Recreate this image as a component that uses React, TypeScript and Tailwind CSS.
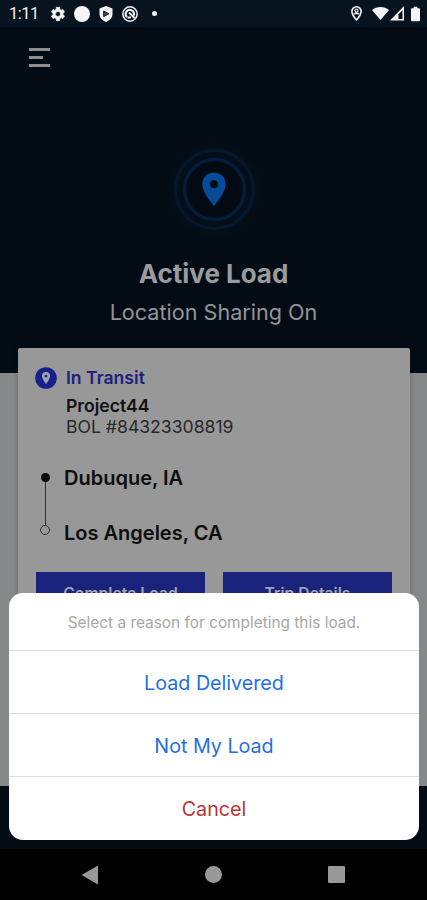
import React from "react";

function StatusBar() {
  return (
    <div className="flex h-[27px] shrink-0 items-center bg-[#07131e] pl-[9px] pr-[7px] text-[#f4f4f4]">
      <span className="w-[41px] font-[Roboto,sans-serif] text-[16.5px] leading-[27px] tracking-[-0.5px]">1:11</span>
      <svg className="h-4 w-4" viewBox="0 0 24 24" fill="currentColor" stroke="currentColor" strokeWidth="1">
        <path fillRule="evenodd" d="M19.4 13c.1-.3.1-.7.1-1s0-.7-.1-1l2.400-1.900-2.300-4-2.900 1.200-1.700-1L14.500 2h-5l-.4 3.300-1.700 1-2.900-1.200-2.300 4L4.600 11a8 8 0 0 0 0 2l-2.400 1.900 2.300 4 2.900-1.200 1.700 1 .4 3.300h5l.4-3.300 1.700-1 2.900 1.200 2.300-4L19.400 13ZM12 15.800a3.800 3.800 0 1 1 0-7.600 3.800 3.800 0 0 1 0 7.600Z" />
      </svg>
      <span className="ml-[8px] h-4 w-4 rounded-full bg-[#f6f6f6]" />
      <svg className="ml-[9px] h-4 w-[14px]" viewBox="0 0 14 16">
        <path d="M7 0l6.500 2.500V8c0 3.500-2.500 6.500-6.500 8C3 14.500.5 11.500.5 8V2.500Z" fill="currentColor" />
        <path d="M4.700 5l5.200 2.800-5.200 2.800Z" fill="#444d56" stroke="#07131e" strokeWidth="1" />
      </svg>
      <svg className="ml-[9px] h-4 w-4" viewBox="0 0 16 16" fill="none" stroke="currentColor">
        <circle cx="8" cy="8" r="7.200" strokeWidth="1.500" />
        <path d="M5 11A4.100 4.100 0 1 1 11.500 9.800" strokeWidth="2.100" />
        <path d="M7 6.500l5.500 5.500M5.500 11.500h3.500" strokeWidth="1.800" />
      </svg>
      <span className="ml-[14px] h-[5px] w-[5px] rounded-full bg-[#f6f6f6]" />
      <svg className="ml-auto h-[15px] w-[11px]" viewBox="0 0 11 15" fill="none" stroke="currentColor">
        <path d="M5.500.8a4.600 4.600 0 0 1 4.600 4.600c0 3.200-4.600 8.600-4.600 8.600S.9 8.600.9 5.400A4.600 4.600 0 0 1 5.500.8Z" strokeWidth="1.600" />
        <circle cx="5.500" cy="4.500" r="1.500" strokeWidth="1.200" />
        <path d="M3 8.300c1.500-1.400 3.500-1.400 5 0" strokeWidth="1.500" />
      </svg>
      <svg className="ml-[10px] h-[15px] w-[17px]" viewBox="0 0 17 15" fill="currentColor"><path d="M0 4C4.500.1 12.500.1 17 4L8.500 14Z" /></svg>
      <svg className="ml-[1px] h-[15px] w-[14px]" viewBox="0 0 14 15"><path fill="currentColor" d="M0 14.500L14 0V14.500Z" /><path d="M8.500 8.200l4-4v8.800h-4Z" fill="#07131e" /></svg>
      <svg className="ml-[7px] h-[16px] w-[9px]" viewBox="0 0 10 16" fill="currentColor"><path d="M3 0h4v1.500h2A1 1 0 0 1 10 2.500V15a1 1 0 0 1-1 1H1a1 1 0 0 1-1-1V2.500a1 1 0 0 1 1-1h2Z" /></svg>
    </div>
  );
}

function Header() {
  return (
    <header className="h-[346px] shrink-0 bg-[#030c14]">
      <div className="flex h-[106px] flex-col items-start gap-[5px] pl-[29px] pt-[21px]">
        <span className="h-[3px] w-[21px] bg-[#8d8d8d]" />
        <span className="h-[3px] w-[14px] bg-[#8d8d8d]" />
        <span className="h-[3px] w-[21px] bg-[#8d8d8d]" />
      </div>
      <svg className="mx-auto block h-[112px] w-[112px]" viewBox="0 0 112 112">
        <defs>
          <radialGradient id="glow">
            <stop offset="0.6" stopColor="#041525" />
            <stop offset="1" stopColor="#030c14" stopOpacity="0" />
          </radialGradient>
        </defs>
        <circle cx="56.500" cy="56.500" r="54" fill="url(#glow)" opacity=".6" />
        <circle cx="56.500" cy="56.500" r="39" fill="#030e18" stroke="#04172b" strokeWidth="3.500" />
        <circle cx="56.500" cy="56.500" r="30" fill="#020b13" stroke="#041c37" strokeWidth="3.500" />
        <path fillRule="evenodd" d="M56 39.500c-6.600 0-11.700 5.100-11.700 11.700 0 8.700 11.700 21.600 11.700 21.600S67.700 59.900 67.700 51.200c0-6.600-5.100-11.700-11.700-11.700Zm0 7.700a4 4 0 1 1 0 8 4 4 0 0 1 0-8Z" fill="#074b98" />
      </svg>
      <h1 className="mt-[12px] text-center text-[26px] font-bold leading-[34px] tracking-[-0.02px] text-[#999b9d]">Active Load</h1>
      <p className="mt-[4px] text-center text-[21.6px] leading-[34px] text-[#939597]">Location Sharing On</p>
    </header>
  );
}

function LoadCard() {
  return (
    <section className="ml-[18px] mt-[-25px] h-[300px] w-[392px] rounded-[2px] bg-[#989898] shadow-[0_0_5px_rgba(0,0,0,0.25)]">
      <div className="flex pl-[17px] pt-[20px]">
        <svg className="mr-[9px] mt-[-1px] h-[22px] w-[22px]" viewBox="0 0 22 22">
          <circle cx="11" cy="11" r="10.800" fill="#17208a" />
          <path fillRule="evenodd" d="M11 5a4 4 0 0 0-4 4c0 3 4 8 4 8s4-5 4-8a4 4 0 0 0-4-4Zm0 2.700a1.400 1.400 0 1 1 0 2.800 1.400 1.400 0 0 1 0-2.800Z" fill="#a2a2ae" />
        </svg>
        <div className="text-[17.600px] text-[#111]">
          <p className="h-[26px] font-semibold leading-[20px] text-[#202080]">In Transit</p>
          <p className="font-semibold leading-[23px]">Project44</p>
          <p className="leading-[20px] text-[#292929]">BOL #84323308819</p>
        </div>
      </div>
      <div className="flex pl-[22px] pt-[29px]">
        <div className="flex w-[10px] flex-col items-center pt-[7px]">
          <span className="h-[9px] w-[9px] rounded-full bg-[#090909]" />
          <span className="h-[43px] w-px bg-[#303030]" />
          <span className="h-[10px] w-[10px] rounded-full border border-[#333]" />
        </div>
        <div className="ml-[14px] text-[20px] font-semibold leading-[24px] text-[#0d0d0d]">
          <p>Dubuque, IA</p>
          <p className="mt-[31px]">Los Angeles, CA</p>
        </div>
      </div>
      <div className="mt-[27px] flex justify-between px-[18px] text-center text-[15.700px] font-semibold leading-[43px] text-[#a0a2b5]">
        <div className="h-[44px] w-[169px] bg-[#19237b]">Complete Load</div>
        <div className="h-[44px] w-[169px] bg-[#19237b]">Trip Details</div>
      </div>
    </section>
  );
}

function ActionSheet() {
  return (
    <div className="absolute left-[9px] top-[593px] h-[247px] w-[410px] overflow-hidden rounded-[14px] bg-white text-center">
      <p className="h-[57px] text-[15.400px] leading-[59px] text-[#a7a7a7]">Select a reason for completing this load.</p>
      <button className="block h-[63px] w-full border-t border-[#dedede] text-[19.700px] leading-[64px] text-[#246fe0]">Load Delivered</button>
      <button className="block h-[63px] w-full border-t border-[#dedede] text-[19.700px] leading-[64px] text-[#246fe0]">Not My Load</button>
      <button className="block h-[64px] w-full border-t border-[#dedede] text-[19.700px] leading-[64px] text-[#ba3434]">Cancel</button>
    </div>
  );
}

export default function App() {
  return (
    <div className="relative flex h-[900px] w-[427px] flex-col overflow-hidden bg-black font-[Inter,sans-serif]">
      <StatusBar />
      <Header />
      <main className="h-[413px] shrink-0 bg-[#87888a]"><LoadCard /></main>
      <div className="h-[63px] shrink-0 bg-[#030c14]" />
      <nav className="flex h-[51px] shrink-0 items-center justify-between bg-black pl-[81px] pr-[82px]">
        <svg className="h-[20px] w-[17px]" viewBox="0 0 17 20"><path d="M.5 10L17 .5v19Z" fill="#999" /></svg>
        <span className="h-[17px] w-[17px] rounded-full bg-[#999]" />
        <span className="h-[17px] w-[17px] rounded-[1px] bg-[#999]" />
      </nav>
      <ActionSheet />
    </div>
  );
}
